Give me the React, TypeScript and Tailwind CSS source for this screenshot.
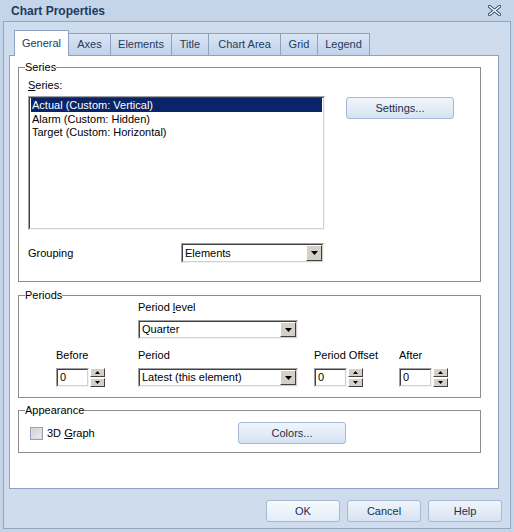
import React from "react";

const font = "font-['Liberation_Sans',Arial,sans-serif]";

function DownArrow() {
  return (
    <svg width="7" height="4" viewBox="0 0 7 4">
      <path d="M0 0h7L3.5 4z" fill="#000" />
    </svg>
  );
}

function UpSmall() {
  return (
    <svg width="5" height="3" viewBox="0 0 5 3">
      <path d="M0 3h5L2.5 0z" fill="#000" />
    </svg>
  );
}
function DownSmall() {
  return (
    <svg width="5" height="3" viewBox="0 0 5 3">
      <path d="M0 0h5L2.5 3z" fill="#000" />
    </svg>
  );
}

function Sunken({ className, children }: { className: string; children?: React.ReactNode }) {
  return (
    <div className={`${className} border-t border-l border-t-[#a0a0a0] border-l-[#a0a0a0] border-r border-b border-r-[#f4f4f4] border-b-[#f4f4f4]`}>
      <div className="w-full h-full border-t border-l border-t-[#404040] border-l-[#404040] border-r border-b border-r-[#d4d0c8] border-b-[#d4d0c8] bg-white">
        {children}
      </div>
    </div>
  );
}

function Raised({ className, children }: { className: string; children?: React.ReactNode }) {
  return (
    <div className={`${className} bg-[#d4d0c8] border-t border-l border-t-[#ffffff] border-l-[#ffffff] border-r border-b border-r-[#404040] border-b-[#404040] flex items-center justify-center`}>
      {children}
    </div>
  );
}

function Combo({ value, className }: { value: string; className: string }) {
  return (
    <Sunken className={className}>
      <div className="flex h-full items-center">
        <span className="flex-1 pl-[2px] text-[11px] text-black leading-none">{value}</span>
        <Raised className="w-[16px] h-full">
          <DownArrow />
        </Raised>
      </div>
    </Sunken>
  );
}

function Spin() {
  return (
    <div className="flex items-start">
      <Sunken className="w-[33px] h-[19px]">
        <div className="h-full flex items-center pl-[2px] text-[11px] leading-none text-black">0</div>
      </Sunken>
      <div className="ml-[1px] flex flex-col gap-[1px]">
        <Raised className="w-[15px] h-[9px]">
          <UpSmall />
        </Raised>
        <Raised className="w-[15px] h-[9px]">
          <DownSmall />
        </Raised>
      </div>
    </div>
  );
}

function Group({ label, className, children }: { label: string; className: string; children?: React.ReactNode }) {
  return (
    <div className={`relative border border-[#8c8c8c] ${className}`}>
      <span className="absolute left-[6px] top-[-7px] bg-white text-[11px] leading-[13px] text-black">{label}</span>
      {children}
    </div>
  );
}

function BlueButton({ label, className }: { label: React.ReactNode; className: string }) {
  return (
    <div
      className={`${className} flex items-center justify-center rounded-[3px] border border-[#a6b9d3] bg-gradient-to-b from-[#f0f5fb] to-[#d6e3f3] text-[11px] text-[#1e2f48]`}
    >
      {label}
    </div>
  );
}

const tabs: { name: string; w: string }[] = [
  { name: "Axes", w: "w-[42px]" },
  { name: "Elements", w: "w-[61px]" },
  { name: "Title", w: "w-[37px]" },
  { name: "Chart Area", w: "w-[72px]" },
  { name: "Grid", w: "w-[37px]" },
  { name: "Legend", w: "w-[52px]" },
];

export default function App() {
  return (
    <div className={`${font} w-[514px] h-[532px] bg-[#c4d4e9] overflow-hidden`}>
      {/* title bar */}
      <div className="h-[21px] flex items-center justify-between pl-[11px] pr-[13px]">
        <span className="text-[12px] font-bold text-[#1e3a5f]">Chart Properties</span>
        <svg width="13" height="11" viewBox="0 0 13 11">
          <path d="M1.5 1.5L11.5 9.5M11.5 1.5L1.5 9.5" stroke="#3d4f68" strokeWidth="3.4" strokeLinecap="round" />
          <path d="M1.5 1.5L11.5 9.5M11.5 1.5L1.5 9.5" stroke="#ffffff" strokeWidth="1.4" strokeLinecap="round" />
        </svg>
      </div>
      {/* frame */}
      <div className="ml-[3px] w-[508px] h-[508px] border border-[#91a6c3] bg-[#cfdcee] pl-[5px] pt-[8px]">
        {/* tab strip */}
        <div className="flex items-end h-[25px] ml-[5px]">
          <div className="relative z-10 mb-[-1px] w-[55px] h-[26px] bg-white border-t border-l border-r border-[#8da2c0] flex items-center justify-center text-[11px] text-[#1e3a5f] pb-[1px]">
            General
          </div>
          {tabs.map((t) => (
            <div
              key={t.name}
              className={`${t.w} h-[22px] border-t border-r border-[#8da2c0] bg-gradient-to-b from-[#d9e5f4] to-[#c1d3ea] flex items-center justify-center text-[11px] text-[#1e3a5f]`}
            >
              {t.name}
            </div>
          ))}
        </div>
        {/* panel */}
        <div className="w-[490px] h-[434px] bg-white border border-[#8da2c0] pt-[11px] pl-[8px] flex flex-col">
          <Group label="Series" className="w-[463px] h-[215px] pt-[11px] pl-[9px]">
            <div className="text-[11px] leading-[13px] text-black">
              <span className="underline">S</span>eries:
            </div>
            <div className="flex items-start mt-[4px]">
              <Sunken className="w-[297px] h-[134px]">
                <div className="pl-[1px] pr-[1px] text-[11px]">
                  <div className="h-[14px] bg-[#0a246a] text-white flex items-center pl-[1px]">Actual (Custom: Vertical)</div>
                  <div className="h-[14px] text-black flex items-center pl-[1px]">Alarm (Custom: Hidden)</div>
                  <div className="h-[13px] text-black flex items-center pl-[1px]">Target (Custom: Horizontal)</div>
                </div>
              </Sunken>
              <BlueButton label="Settings..." className="ml-[21px] mt-[1px] w-[108px] h-[22px]" />
            </div>
            <div className="flex items-center mt-[13px]">
              <span className="w-[153px] text-[11px] text-black">Grouping</span>
              <Combo value="Elements" className="w-[143px] h-[20px]" />
            </div>
          </Group>
          <Group label="Periods" className="mt-[13px] w-[463px] h-[103px]">
            <div className="pl-[119px] pt-[5px]">
              <div className="text-[11px] leading-[13px] text-black">
                Period <span className="underline">l</span>evel
              </div>
              <Combo value="Quarter" className="mt-[6px] w-[160px] h-[19px]" />
            </div>
            <div className="flex pl-[37px] mt-[10px]">
              <div className="w-[82px]">
                <div className="text-[11px] leading-[13px] text-black">Before</div>
                <div className="mt-[6px]"><Spin /></div>
              </div>
              <div className="w-[176px]">
                <div className="text-[11px] leading-[13px] text-black">Period</div>
                <Combo value="Latest (this element)" className="mt-[6px] w-[160px] h-[19px]" />
              </div>
              <div className="w-[85px]">
                <div className="text-[11px] leading-[13px] text-black">Period Offset</div>
                <div className="mt-[6px]"><Spin /></div>
              </div>
              <div>
                <div className="text-[11px] leading-[13px] text-black">After</div>
                <div className="mt-[6px]"><Spin /></div>
              </div>
            </div>
          </Group>
          <Group label="Appearance" className="mt-[12px] w-[463px] h-[43px] pt-[11px] pl-[11px]">
            <div className="flex items-center">
              <div className="flex items-center w-[208px]">
                <div className="w-[13px] h-[13px] border border-[#8fa2bd] bg-[#dcdcdc] p-[1px]">
                  <div className="w-full h-full bg-gradient-to-br from-[#d0d0d0] to-[#ececec]" />
                </div>
                <span className="ml-[4px] text-[11px] text-black">
                  3D <span className="underline">G</span>raph
                </span>
              </div>
              <BlueButton label="Colors..." className="w-[108px] h-[22px]" />
            </div>
          </Group>
        </div>
        {/* bottom buttons */}
        <div className="flex justify-end gap-[7px] mt-[11px] pr-[8px]">
          <BlueButton label="OK" className="w-[74px] h-[22px] !from-[#f7fafd] !to-[#e3ecf7]" />
          <BlueButton label="Cancel" className="w-[74px] h-[22px]" />
          <BlueButton label="Help" className="w-[74px] h-[22px]" />
        </div>
      </div>
    </div>
  );
}
